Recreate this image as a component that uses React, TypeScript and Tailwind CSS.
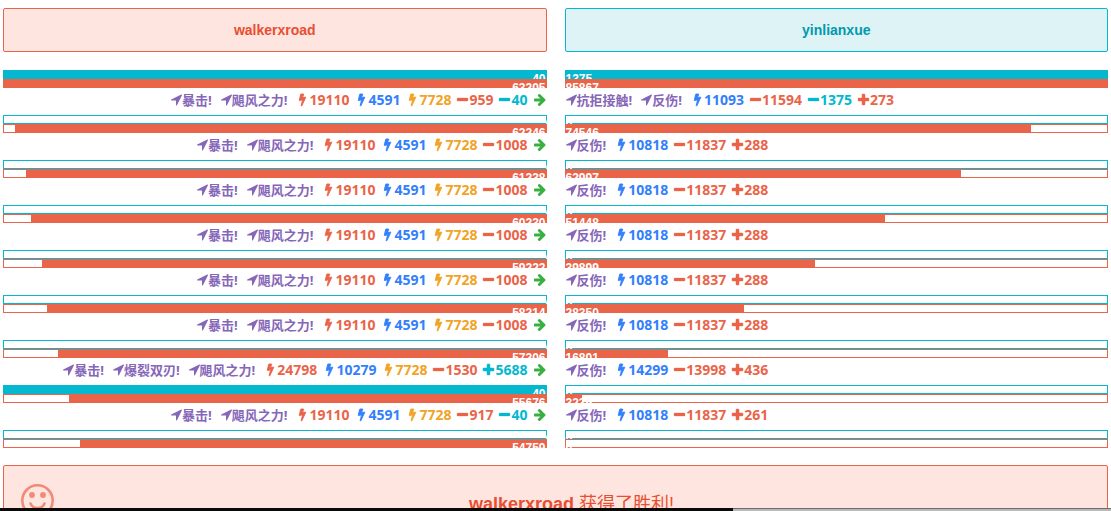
import React from 'react';

type Kind = 'skill' | 'bolt' | 'minus' | 'plus' | 'next';
type Tone = 'purple' | 'red' | 'blue' | 'amber' | 'cyan' | 'green';
type Entry = [Kind, Tone, string];
type Level = { value: number; percent: number };
type Round = { shield: Level; health: Level; log: Entry[] };

const tones: Record<Tone, string> = {
  purple: 'text-[#8666b8]',
  red: 'text-[#ea644a]',
  blue: 'text-[#3280fc]',
  amber: 'text-[#f1a325]',
  cyan: 'text-[#03b8cf]',
  green: 'text-[#38b03f]',
};

const icons: Record<Kind, { box: string; size: string; weight: number; d: string }> = {
  skill: {
    box: '192 192 1408 1408',
    size: 'size-[11px]',
    weight: 0,
    d: 'M1593 349l-640 1280q-17 35-57 35-5 0-15-2-22-5-35.500-22.500t-13.500-39.500v-576h-576q-22 0-39.500-13.500t-22.500-35.500 4-42 29-30l1280-640q13-7 29-7 27 0 45 19 15 14 18.500 34.500t-6.500 39.500z',
  },
  bolt: {
    box: '0 128 896 1664',
    size: 'w-[7px] h-3',
    weight: 130,
    d: 'M885 566q18 20 7 44l-540 1157q-13 25-42 25-4 0-14-2-17-5-25.500-19t-4.500-30l197-808-406 101q-4 1-12 1-18 0-31-11-18-15-13-39l201-825q4-14 16-23t28-9h328q19 0 32 12.500t13 29.500q0 8-5 18l-171 463 396-98q8-2 12-2 19 0 34 15z',
  },
  minus: {
    box: '192 128 1408 1408',
    size: 'size-[11px]',
    weight: 40,
    d: 'M1600 736v192q0 40-28 68t-68 28h-1216q-40 0-68-28t-28-68v-192q0-40 28-68t68-28h1216q40 0 68 28t28 68z',
  },
  plus: {
    box: '192 128 1408 1408',
    size: 'size-[11px]',
    weight: 60,
    d: 'M1600 736v192q0 40-28 68t-68 28h-416v416q0 40-28 68t-68 28h-192q-40 0-68-28t-28-68v-416h-416q-40 0-68-28t-28-68v-192q0-40 28-68t68-28h416v-416q0-40 28-68t68-28h192q40 0 68 28t28 68v416h416q40 0 68 28t28 68z',
  },
  next: {
    box: '128 192 1536 1536',
    size: 'size-3',
    weight: 0,
    d: 'M1600 960q0 54-37 91l-651 651q-39 37-91 37-51 0-90-37l-75-75q-38-38-38-91t38-91l293-293h-704q-52 0-84.500-37.500t-32.500-90.500v-128q0-53 32.500-90.500t84.500-37.500h704l-293-294q-38-36-38-90t38-90l75-75q38-38 90-38 53 0 91 38l651 651q37 35 37 90z',
  },
};

const spacing: Record<Kind, string> = {
  skill: 'pr-[3px] text-[13px]',
  bolt: 'gap-[3px] pl-[3px] text-sm',
  minus: 'gap-px text-sm',
  plus: 'gap-px text-sm',
  next: 'text-sm',
};

const attack = (damage: string, extra: Entry[] = []): Entry[] => [
  ['skill', 'purple', '暴击!'],
  ['skill', 'purple', '飓风之力!'],
  ['bolt', 'red', '19110'],
  ['bolt', 'blue', '4591'],
  ['bolt', 'amber', '7728'],
  ['minus', 'red', damage],
  ...extra,
  ['next', 'green', ''],
];

const counter = (power: string, damage: string, heal: string): Entry[] => [
  ['skill', 'purple', '反伤!'],
  ['bolt', 'blue', power],
  ['minus', 'red', damage],
  ['plus', 'red', heal],
];

const none: Level = { value: 0, percent: 0 };

const left: Round[] = [
  { shield: { value: 40, percent: 100 }, health: { value: 63205, percent: 100 }, log: attack('959', [['minus', 'cyan', '40']]) },
  { shield: none, health: { value: 62246, percent: 98 }, log: attack('1008') },
  { shield: none, health: { value: 61238, percent: 96 }, log: attack('1008') },
  { shield: none, health: { value: 60230, percent: 95 }, log: attack('1008') },
  { shield: none, health: { value: 59222, percent: 93 }, log: attack('1008') },
  { shield: none, health: { value: 58214, percent: 92 }, log: attack('1008') },
  {
    shield: none,
    health: { value: 57206, percent: 90 },
    log: [
      ['skill', 'purple', '暴击!'],
      ['skill', 'purple', '爆裂双刃!'],
      ['skill', 'purple', '飓风之力!'],
      ['bolt', 'red', '24798'],
      ['bolt', 'blue', '10279'],
      ['bolt', 'amber', '7728'],
      ['minus', 'red', '1530'],
      ['plus', 'cyan', '5688'],
      ['next', 'green', ''],
    ],
  },
  { shield: { value: 40, percent: 100 }, health: { value: 55676, percent: 88 }, log: attack('917', [['minus', 'cyan', '40']]) },
  { shield: none, health: { value: 54759, percent: 86 }, log: [] },
];

const right: Round[] = [
  {
    shield: { value: 1375, percent: 100 },
    health: { value: 85867, percent: 100 },
    log: [
      ['skill', 'purple', '抗拒接触!'],
      ['skill', 'purple', '反伤!'],
      ['bolt', 'blue', '11093'],
      ['minus', 'red', '11594'],
      ['minus', 'cyan', '1375'],
      ['plus', 'red', '273'],
    ],
  },
  { shield: none, health: { value: 74546, percent: 86 }, log: counter('10818', '11837', '288') },
  { shield: none, health: { value: 62997, percent: 73 }, log: counter('10818', '11837', '288') },
  { shield: none, health: { value: 51448, percent: 59 }, log: counter('10818', '11837', '288') },
  { shield: none, health: { value: 39899, percent: 46 }, log: counter('10818', '11837', '288') },
  { shield: none, health: { value: 28350, percent: 33 }, log: counter('10818', '11837', '288') },
  { shield: none, health: { value: 16801, percent: 19 }, log: counter('14299', '13998', '436') },
  { shield: none, health: { value: 3239, percent: 3 }, log: counter('10818', '11837', '261') },
  { shield: none, health: none, log: [] },
];

function Bar({ level, tone, mirrored }: { level: Level; tone: 'cyan' | 'red'; mirrored: boolean }) {
  const edge = tone === 'cyan' ? 'border-[#03b8cf]' : 'border-[#ea644a]';
  const fill = tone === 'cyan' ? 'bg-[#03b8cf]' : 'bg-[#ea644a]';
  return (
    <div className="overflow-hidden">
      <div className={`flex h-[9px] border ${edge} ${mirrored ? 'justify-end' : ''}`}>
        <div
          className={`h-2 whitespace-nowrap text-xs leading-4 font-bold text-white ${fill} ${mirrored && level.percent > 0 ? 'text-right' : ''}`}
          style={{ width: `${level.percent}%` }}
        >
          {level.value}
        </div>
      </div>
    </div>
  );
}

function Log({ entries, mirrored }: { entries: Entry[]; mirrored: boolean }) {
  return (
    <div
      className={`flex h-[27px] items-center gap-1.5 px-px pb-1 font-['Open_Sans','Noto_Sans_CJK_SC',sans-serif] leading-5 font-bold whitespace-nowrap ${mirrored ? 'justify-end' : ''}`}
    >
      {entries.map(([kind, tone, text], i) => (
        <span key={i} className={`flex items-center leading-5 ${spacing[kind]} ${tones[tone]}`}>
          <svg
            viewBox={icons[kind].box}
            className={`shrink-0 overflow-visible fill-current stroke-current ${icons[kind].size}`}
            strokeWidth={icons[kind].weight}
            aria-hidden="true"
          >
            <path d={icons[kind].d} />
          </svg>
          {text}
        </span>
      ))}
    </div>
  );
}

function Fighter({ name, rounds, mirrored }: { name: string; rounds: Round[]; mirrored: boolean }) {
  const heading = mirrored
    ? 'border-[#ea644a] bg-[#ffe5e0] text-[#e84e30]'
    : 'border-[#03b8cf] bg-[#ddf3f5] text-[#0299ad]';
  return (
    <section className="min-w-0">
      <h2 className={`mb-[18px] flex h-11 items-center justify-center rounded-xs border text-sm font-bold ${heading}`}>{name}</h2>
      {rounds.map((round, i) => (
        <div key={i}>
          <Bar level={round.shield} tone="cyan" mirrored={mirrored} />
          <Bar level={round.health} tone="red" mirrored={mirrored} />
          {round.log.length > 0 && <Log entries={round.log} mirrored={mirrored} />}
        </div>
      ))}
    </section>
  );
}

export default function App() {
  return (
    <div className="relative h-screen overflow-hidden bg-white px-[3px] pt-2 font-['Liberation_Sans','Noto_Sans_CJK_SC',sans-serif]">
      <main className="grid grid-cols-2 gap-[18px]">
        <Fighter name="walkerxroad" rounds={left} mirrored />
        <Fighter name="yinlianxue" rounds={right} mirrored={false} />
      </main>
      <div className="mt-[17px] flex h-20 items-start rounded-xs border border-[#ea644a] bg-[#ffe5e0] px-4 pt-4 text-[#e84e30]">
        <svg viewBox="0 0 36 36" className="size-9 shrink-0 opacity-60" fill="none" stroke="currentColor" aria-hidden="true">
          <circle cx="17.500" cy="18.500" r="15.200" strokeWidth="2.600" />
          <circle cx="12" cy="13" r="2.900" fill="currentColor" stroke="none" />
          <circle cx="23" cy="13" r="2.900" fill="currentColor" stroke="none" />
          <path d="M10.500 21.500a7.600 7.600 0 0 0 14 0" strokeWidth="2.600" strokeLinecap="round" />
        </svg>
        <p className="grow pt-2 pr-1 text-center text-lg">
          <strong>walkerxroad</strong> 获得了胜利!
        </p>
      </div>
      <div className="absolute inset-x-0 bottom-0 flex h-[3px]">
        <div className="w-[66%] bg-[#0a0a0a]" />
        <div className="grow border-t border-[#6b6b6b] bg-[#b9b9b9]" />
      </div>
    </div>
  );
}
